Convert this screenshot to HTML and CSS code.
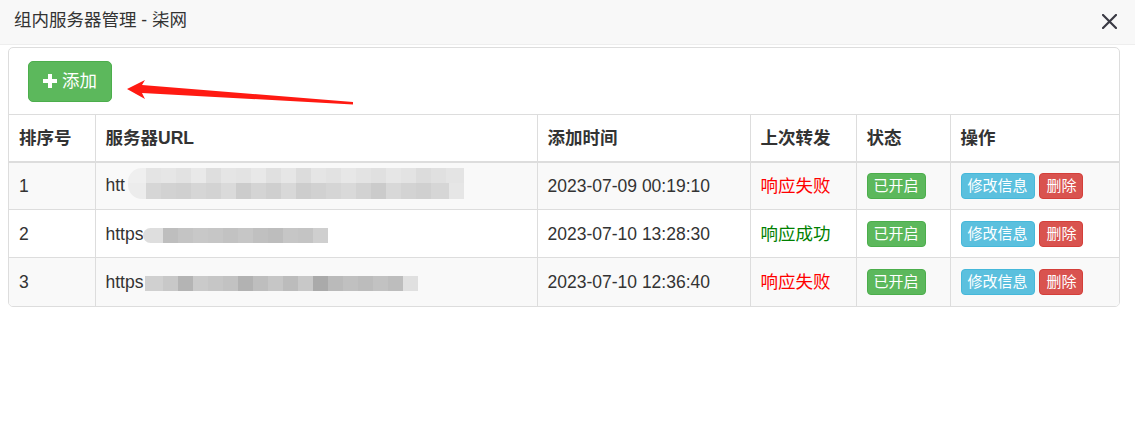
FILE: index.html
```html
<!DOCTYPE html>
<html lang="zh-CN">
<head>
<meta charset="utf-8">
<title>组内服务器管理 - 柒网</title>
<link rel="stylesheet" href="styles.css">
</head>
<body>
<div class="titlebar">
  <span class="title">组内服务器管理 - 柒网</span>
  <svg class="close" width="15" height="15" viewBox="0 0 15 15"><path d="M1 1L14 14M14 1L1 14" stroke="#3a3a44" stroke-width="2.2" stroke-linecap="square" fill="none"/></svg>
</div>
<div class="panel">
  <div class="panel-body">
    <button class="btn btn-add"><svg class="plus" width="14" height="14" viewBox="0 0 14 14"><path d="M5 0h4v5h5v4H9v5H5V9H0V5h5z" fill="#fff"/></svg><span>添加</span></button>
  </div>
  <table class="table">
    <colgroup>
      <col class="c1"><col class="c2"><col class="c3"><col class="c4"><col class="c5"><col class="c6">
    </colgroup>
    <thead>
      <tr><th>排序号</th><th>服务器URL</th><th>添加时间</th><th>上次转发</th><th>状态</th><th>操作</th></tr>
    </thead>
    <tbody>
      <tr>
        <td>1</td>
        <td>htt<span class="mosaic m1"><span class="m1a"></span><span class="m1b"></span></span></td>
        <td>2023-07-09 00:19:10</td>
        <td class="fail">响应失败</td>
        <td><span class="btn-xs success">已开启</span></td>
        <td><span class="btn-xs info">修改信息</span> <span class="btn-xs danger">删除</span></td>
      </tr>
      <tr>
        <td>2</td>
        <td>https<span class="mosaic m2"></span></td>
        <td>2023-07-10 13:28:30</td>
        <td class="ok">响应成功</td>
        <td><span class="btn-xs success">已开启</span></td>
        <td><span class="btn-xs info">修改信息</span> <span class="btn-xs danger">删除</span></td>
      </tr>
      <tr>
        <td>3</td>
        <td>https<span class="mosaic m3"></span></td>
        <td>2023-07-10 12:36:40</td>
        <td class="fail">响应失败</td>
        <td><span class="btn-xs success">已开启</span></td>
        <td><span class="btn-xs info">修改信息</span> <span class="btn-xs danger">删除</span></td>
      </tr>
    </tbody>
  </table>
</div>
<svg class="arrow" width="240" height="30" viewBox="120 78 240 30">
  <polygon points="127,89 145,80 142,85 353,102 353,104.5 142,93 145,99" fill="#ff1a12"/>
</svg>
</body>
</html>
```
FILE: styles.css
```css
* { box-sizing: border-box; }
html, body { margin: 0; padding: 0; background: #fff; }
body {
  font-family: "Liberation Sans", "Noto Sans CJK SC", sans-serif;
  font-size: 17.5px;
  color: #333;
  position: relative;
  width: 1135px;
  height: 429px;
  overflow: hidden;
}
.titlebar {
  height: 45px;
  background: #f8f8f8;
  border-bottom: 1px solid #eee;
  display: flex;
  align-items: flex-start;
  justify-content: space-between;
  padding: 0 18px 0 14px;
}
.title {
  line-height: 40px;
  font-size: 17.5px;
  color: #333;
}
.close { margin-top: 14px; }
.panel {
  margin: 2px 15px 0 8px;
  border: 1px solid #ddd;
  border-radius: 5px;
  background: #fff;
  overflow: hidden;
}
.panel-body { padding: 13px 19px 12px; }
.btn {
  font-family: inherit;
  cursor: pointer;
}
.btn-add {
  display: flex;
  align-items: center;
  height: 41px;
  padding: 0 14px 0 14px;
  background: #5cb85c;
  border: 1px solid #4cae4c;
  border-radius: 5px;
  color: #fff;
  font-size: 17.5px;
  line-height: 25px;
}
.btn-add .plus { margin-right: 5px; margin-top: -1px; }
.table {
  width: 100%;
  table-layout: fixed;
  border-collapse: collapse;
}
.c1 { width: 86px; }
.c2 { width: 442px; }
.c3 { width: 213px; }
.c4 { width: 106px; }
.c5 { width: 94px; }
.c6 { width: 169px; }
th, td {
  border: 1px solid #ddd;
  text-align: left;
  white-space: nowrap;
  overflow: visible;
  padding: 0 10px;
  line-height: 24px;
  vertical-align: middle;
}
th:first-child, td:first-child { border-left: 0; }
th:last-child, td:last-child { border-right: 0; }
tbody tr:last-child td { border-bottom: 0; }
th {
  font-weight: bold;
  height: 47px;
  border-bottom: 2px solid #ddd;
}
td { height: 48px; }
tbody tr:nth-child(odd) td { background: #f9f9f9; }
.fail { color: #ff0000; }
.ok { color: #008000; }
.btn-xs {
  display: inline-block;
  vertical-align: middle;
  font-size: 15px;
  line-height: 24px;
  padding: 0 6px;
  border: 1px solid transparent;
  border-radius: 4px;
  color: #fff;
}
.success { background: #5cb85c; border-color: #4cae4c; }
.info { background: #5bc0de; border-color: #46b8da; }
.danger { background: #d9534f; border-color: #d43f3a; }
.mosaic {
  display: inline-block;
  vertical-align: middle;
}
.m1 {
  width: 336px;
  height: 31px;
  margin-left: 3px;
  margin-top: -5px;
  border-radius: 14px 0 0 14px;
  overflow: hidden;
}
.m1a, .m1b { display: block; height: 15.5px; }
.m1a {
  background: linear-gradient(to right, #efefef 0 18px, #e4e4e4 18px 33px, #e6e6e6 33px 48px, #e2e2e2 48px 63px, #e9e9e9 63px 78px, #dedede 78px 93px, #e5e5e5 93px 108px, #e3e3e3 108px 123px, #e8e8e8 123px 138px, #e0e0e0 138px 153px, #e6e6e6 153px 168px, #dcdcdc 168px 183px, #e5e5e5 183px 198px, #e2e2e2 198px 213px, #e7e7e7 213px 228px, #e3e3e3 228px 243px, #e0e0e0 243px 258px, #e6e6e6 258px 273px, #e3e3e3 273px 288px, #dcdcdc 288px 303px, #e0e0e0 303px 318px, #e4e4e4 318px 336px);
}
.m1b {
  background: linear-gradient(to right, #ececec 0 18px, #d6d6d6 18px 33px, #d2d2d2 33px 48px, #d0d0d0 48px 63px, #d6d6d6 63px 78px, #d3d3d3 78px 93px, #dadada 93px 108px, #cccccc 108px 123px, #d4d4d4 123px 138px, #cfcfcf 138px 153px, #d8d8d8 153px 168px, #cdcdcd 168px 183px, #d1d1d1 183px 198px, #d5d5d5 198px 213px, #d9d9d9 213px 228px, #d2d2d2 228px 243px, #cbcbcb 243px 258px, #d8d8d8 258px 273px, #d3d3d3 273px 288px, #d0d0d0 288px 303px, #d6d6d6 303px 321px, #e6e6e6 321px 336px);
}
.m2 {
  width: 185px;
  height: 15px;
  margin-top: 2px;
  border-radius: 8px 0 0 8px;
  background: linear-gradient(to right, #dedede 0 20px, #bebebe 20px 35px, #c4c4c4 35px 50px, #c8c8c8 50px 65px, #c6c6c6 65px 80px, #c2c2c2 80px 95px, #c6c6c6 95px 110px, #c0c0c0 110px 125px, #bdbdbd 125px 140px, #c6c6c6 140px 155px, #c4c4c4 155px 170px, #cfcfcf 170px 185px);
}
.m3 {
  width: 273px;
  height: 15px;
  margin-left: 2px;
  background: linear-gradient(to right, #d0d0d0 0 18px, #c8c8c8 18px 33px, #b4b4b4 33px 48px, #cacaca 48px 63px, #c6c6c6 63px 78px, #c2c2c2 78px 93px, #b2b2b2 93px 108px, #bebebe 108px 123px, #c6c6c6 123px 138px, #bcbcbc 138px 153px, #c8c8c8 153px 168px, #aaaaaa 168px 183px, #bababa 183px 198px, #c0c0c0 198px 213px, #bcbcbc 213px 228px, #c2c2c2 228px 243px, #bdbdbd 243px 258px, #e0e0e0 258px 273px);
}
.arrow {
  position: absolute;
  left: 120px;
  top: 78px;
}
```
